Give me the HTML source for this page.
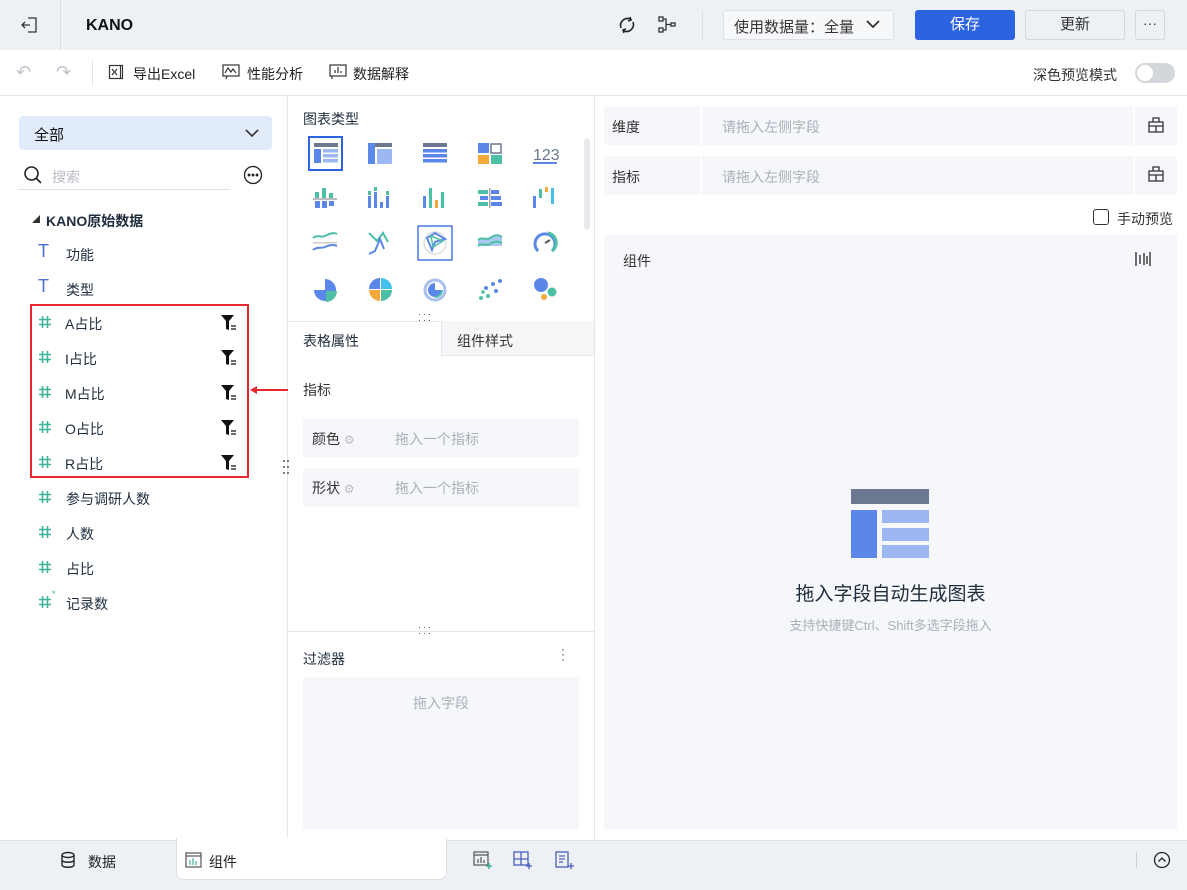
<!DOCTYPE html>
<html><head><meta charset="utf-8"><style>
*{box-sizing:border-box;margin:0;padding:0}
body{width:1187px;height:890px;position:relative;overflow:hidden;background:#fff;font-family:"Liberation Sans","Noto Sans CJK SC",sans-serif;font-size:14px;color:#1f2d3d}
.a{position:absolute}
.h{position:absolute;left:38px;width:14px;height:14px}
</style></head><body>
<svg width="0" height="0" style="position:absolute"><defs><g id="hs" stroke="#3fb39a" stroke-width="1.6" fill="none"><path d="M4.5 1v12M9.5 1v12M1 4.5h12M1 9.5h12"/></g></defs></svg>
<!-- top bar -->
<div class="a" style="left:0;top:0;width:1187px;height:50px;background:#edf0f5"></div>
<div class="a" style="left:60px;top:0;width:1px;height:50px;background:#d8dce3"></div>
<svg class="a" style="left:20px;top:15px" width="20" height="20" viewBox="0 0 20 20" fill="none" stroke="#333" stroke-width="1.3"><path d="M8 3h8v14H8M2 10h8M5 7l-3 3 3 3"/></svg>
<div class="a" style="left:86px;top:17px;font-weight:bold;font-size:16px;color:#111">KANO</div>
<svg class="a" style="left:617px;top:15px" width="20" height="20" viewBox="0 0 20 20" fill="none" stroke="#222" stroke-width="1.6"><path d="M4 13a7 7 0 0 1 9-9M16 7a7 7 0 0 1-9 9"/><path d="M13 2l1 3-3 1M7 18l-1-3 3-1"/></svg>
<svg class="a" style="left:657px;top:15px" width="20" height="20" viewBox="0 0 20 20" fill="none" stroke="#333" stroke-width="1.3"><rect x="2" y="2" width="4" height="4"/><rect x="2" y="13" width="4" height="4"/><rect x="14" y="8" width="4" height="3"/><path d="M6 4h3v11H6M9 9.5h5"/></svg>
<div class="a" style="left:702px;top:10px;width:1px;height:30px;background:#d8dce3"></div>
<div class="a" style="left:723px;top:10px;width:171px;height:30px;background:#f7f8fa;border:1px solid #dde1e7;border-radius:3px;font-size:15px;color:#333;padding:5px 0 0 10px">使用数据量：全量</div>
<svg class="a" style="left:865px;top:17px" width="16" height="14" viewBox="0 0 16 14" fill="none" stroke="#333" stroke-width="1.8"><path d="M2 4l6 6 6-6"/></svg>
<div class="a" style="left:915px;top:10px;width:100px;height:30px;background:#2c63e0;border-radius:3px;color:#fff;font-size:15px;text-align:center;line-height:30px">保存</div>
<div class="a" style="left:1025px;top:10px;width:100px;height:30px;background:#edf0f5;border:1px solid #d3d7de;border-radius:3px;color:#333;font-size:15px;text-align:center;line-height:28px">更新</div>
<div class="a" style="left:1135px;top:10px;width:30px;height:30px;border:1px solid #d3d7de;border-radius:3px;text-align:center;line-height:24px;color:#333">···</div>
<!-- toolbar -->
<div class="a" style="left:0;top:95px;width:1187px;height:1px;background:#e3e6eb"></div>
<div class="a" style="left:16px;top:62px;color:#c0c4cc;font-size:18px">↶</div>
<div class="a" style="left:56px;top:62px;color:#c0c4cc;font-size:18px">↷</div>
<div class="a" style="left:92px;top:60px;width:1px;height:26px;background:#e3e6eb"></div>
<svg class="a" style="left:108px;top:64px" width="16" height="16" viewBox="0 0 16 16" fill="none" stroke="#333" stroke-width="1.2"><rect x="1.5" y="1.5" width="11" height="13"/><path d="M4 5l5 6M9 5l-5 6M12.5 1.5h2v13h-2"/></svg>
<div class="a" style="left:133px;top:64px;font-size:14px;color:#222">导出Excel</div>
<svg class="a" style="left:222px;top:64px" width="18" height="16" viewBox="0 0 18 16" fill="none" stroke="#333" stroke-width="1.2"><rect x="1" y="1" width="16" height="11"/><path d="M3 9l3-5 3 4 2-3 3 4M5 12l-1 3"/></svg>
<div class="a" style="left:247px;top:64px;color:#222">性能分析</div>
<svg class="a" style="left:329px;top:64px" width="18" height="16" viewBox="0 0 18 16" fill="none" stroke="#333" stroke-width="1.2"><rect x="1" y="1" width="16" height="11"/><path d="M6 9V6M9 9V3M12 9V7M3 12v3"/></svg>
<div class="a" style="left:353px;top:64px;color:#222">数据解释</div>
<div class="a" style="left:1033px;top:65px;color:#333;font-size:14px">深色预览模式</div>
<div class="a" style="left:1135px;top:63px;width:40px;height:20px;background:#d3d6db;border-radius:10px"><div style="position:absolute;left:2px;top:2px;width:16px;height:16px;background:#fff;border-radius:8px"></div></div>
<!-- left panel -->
<div class="a" style="left:287px;top:96px;width:1px;height:744px;background:#e3e6eb"></div>
<div class="a" style="left:19px;top:116px;width:253px;height:34px;background:#e1ebfb;border-radius:4px;padding:8px 0 0 15px;font-size:15px;color:#111">全部</div>
<svg class="a" style="left:244px;top:126px" width="16" height="14" viewBox="0 0 16 14" fill="none" stroke="#333" stroke-width="1.6"><path d="M2 4l6 6 6-6"/></svg>
<svg class="a" style="left:23px;top:165px" width="20" height="20" viewBox="0 0 20 20" fill="none" stroke="#222" stroke-width="1.6"><circle cx="8.5" cy="8.5" r="6.5"/><path d="M13 13l5 5"/></svg>
<div class="a" style="left:52px;top:167px;color:#b8bcc4">搜索</div>
<div class="a" style="left:18px;top:189px;width:212px;height:1px;background:#dcdfe5"></div>
<svg class="a" style="left:243px;top:165px" width="20" height="20" viewBox="0 0 20 20" fill="none" stroke="#222" stroke-width="1.3"><circle cx="10" cy="10" r="8.5"/><circle cx="6" cy="10" r=".8" fill="#222"/><circle cx="10" cy="10" r=".8" fill="#222"/><circle cx="14" cy="10" r=".8" fill="#222"/></svg>
<div class="a" style="left:32px;top:214px;font-size:8px;color:#333">◢</div>
<div class="a" style="left:46px;top:211px;font-weight:bold;color:#1f2d3d">KANO原始数据</div>
<div class="a" style="left:38px;top:241px;color:#4b6fd6;font-size:18px">T</div><div class="a" style="left:66px;top:245px">功能</div>
<div class="a" style="left:38px;top:276px;color:#4b6fd6;font-size:18px">T</div><div class="a" style="left:66px;top:280px">类型</div>
<div class="a" style="left:30px;top:304px;width:219px;height:174px;border:2px solid #e8262e"></div>
<svg class="h" style="top:315px"><use href="#hs"/></svg>
<svg class="h" style="top:350px"><use href="#hs"/></svg>
<svg class="h" style="top:385px"><use href="#hs"/></svg>
<svg class="h" style="top:420px"><use href="#hs"/></svg>
<svg class="h" style="top:455px"><use href="#hs"/></svg>
<svg class="h" style="top:490px"><use href="#hs"/></svg>
<svg class="h" style="top:525px"><use href="#hs"/></svg>
<svg class="h" style="top:560px"><use href="#hs"/></svg>
<svg class="h" style="top:595px"><use href="#hs"/></svg>
<div class="a" style="left:52px;top:589px;color:#3fb39a;font-size:9px">*</div>
<div class="a" style="left:65px;top:314px">A占比</div><div class="a" style="left:65px;top:349px">I占比</div><div class="a" style="left:65px;top:384px">M占比</div><div class="a" style="left:65px;top:419px">O占比</div><div class="a" style="left:65px;top:454px">R占比</div>
<div class="a" style="left:66px;top:489px">参与调研人数</div><div class="a" style="left:66px;top:524px">人数</div><div class="a" style="left:66px;top:559px">占比</div><div class="a" style="left:66px;top:594px">记录数</div>
<svg class="a" style="left:220px;top:314px" width="18" height="18" viewBox="0 0 18 18"><path d="M1 1h13l-5 6v9l-3-1V7z" fill="#111"/><path d="M11 12h5M11 15h5" stroke="#111" stroke-width="1.2"/></svg>
<svg class="a" style="left:220px;top:349px" width="18" height="18" viewBox="0 0 18 18"><path d="M1 1h13l-5 6v9l-3-1V7z" fill="#111"/><path d="M11 12h5M11 15h5" stroke="#111" stroke-width="1.2"/></svg>
<svg class="a" style="left:220px;top:384px" width="18" height="18" viewBox="0 0 18 18"><path d="M1 1h13l-5 6v9l-3-1V7z" fill="#111"/><path d="M11 12h5M11 15h5" stroke="#111" stroke-width="1.2"/></svg>
<svg class="a" style="left:220px;top:419px" width="18" height="18" viewBox="0 0 18 18"><path d="M1 1h13l-5 6v9l-3-1V7z" fill="#111"/><path d="M11 12h5M11 15h5" stroke="#111" stroke-width="1.2"/></svg>
<svg class="a" style="left:220px;top:454px" width="18" height="18" viewBox="0 0 18 18"><path d="M1 1h13l-5 6v9l-3-1V7z" fill="#111"/><path d="M11 12h5M11 15h5" stroke="#111" stroke-width="1.2"/></svg>
<svg class="a" style="left:250px;top:385px" width="40" height="10" viewBox="0 0 40 10"><path d="M4 5h34" stroke="#e8262e" stroke-width="2"/><path d="M0 5l7-4v8z" fill="#e8262e"/></svg>
<svg class="a" style="left:282px;top:459px" width="8" height="16" viewBox="0 0 8 16" fill="#555"><circle cx="2" cy="2" r="1"/><circle cx="6" cy="2" r="1"/><circle cx="2" cy="8" r="1"/><circle cx="6" cy="8" r="1"/><circle cx="2" cy="14" r="1"/><circle cx="6" cy="14" r="1"/></svg>
<!-- middle panel -->
<div class="a" style="left:594px;top:96px;width:1px;height:744px;background:#e3e6eb"></div>
<div class="a" style="left:303px;top:109px;font-size:14px;color:#1f2d3d">图表类型</div>
<div class="a" style="left:584px;top:138px;width:6px;height:92px;background:#e8eaee;border-radius:3px"></div>
<svg class="a" style="left:300px;top:130px" width="280" height="180" viewBox="300 130 280 180">
<rect x="309" y="137" width="33" height="33" fill="none" stroke="#2c63e0" stroke-width="2"/>
<rect x="314" y="143" width="24" height="4" fill="#6b7890"/><rect x="314" y="149" width="7" height="14" fill="#5b87e8"/><rect x="323" y="149" width="15" height="3.5" fill="#9bb8f3"/><rect x="323" y="154" width="15" height="3.5" fill="#9bb8f3"/><rect x="323" y="159" width="15" height="3.5" fill="#9bb8f3"/>
<rect x="368" y="143" width="24" height="4" fill="#6b7890"/><rect x="368" y="143" width="7" height="21" fill="#5b87e8"/><rect x="377" y="149" width="15" height="15" fill="#9bb8f3"/>
<rect x="423" y="143" width="24" height="4" fill="#6b7890"/><rect x="423" y="149" width="24" height="3.5" fill="#5b87e8"/><rect x="423" y="154" width="24" height="3.5" fill="#5b87e8"/><rect x="423" y="159" width="24" height="3.5" fill="#5b87e8"/>
<rect x="478" y="143" width="11" height="10" fill="#5b87e8"/><rect x="491" y="144" width="10" height="9" fill="none" stroke="#6b7890" stroke-width="1.5"/><rect x="478" y="155" width="11" height="9" fill="#f6a93b"/><rect x="491" y="155" width="11" height="9" fill="#4dbfa6"/>
<text x="533" y="160" font-size="16" fill="#6b7890" font-family="Liberation Sans">123</text><rect x="533" y="162" width="24" height="2" fill="#5b87e8"/>
<g fill="#5b87e8"><rect x="315" y="201" width="5" height="7"/><rect x="322" y="201" width="5" height="7"/><rect x="329" y="201" width="5" height="5"/></g><g fill="#4dbfa6"><rect x="315" y="192" width="4" height="6"/><rect x="322" y="188" width="4" height="10"/><rect x="329" y="193" width="4" height="5"/></g><rect x="313" y="198" width="24" height="2" fill="#bbb"/>
<g fill="#5b87e8"><rect x="368" y="196" width="3" height="12"/><rect x="374" y="192" width="3" height="16"/><rect x="380" y="202" width="3" height="6"/><rect x="386" y="196" width="3" height="12"/></g><g fill="#4dbfa6"><rect x="368" y="191" width="3" height="4"/><rect x="374" y="187" width="3" height="4"/><rect x="386" y="191" width="3" height="4"/></g>
<rect x="423" y="196" width="3" height="12" fill="#5b87e8"/><rect x="429" y="188" width="3" height="20" fill="#4dbfa6"/><rect x="435" y="200" width="3" height="8" fill="#f6a93b"/><rect x="441" y="192" width="3" height="16" fill="#4dbfa6"/>
<rect x="478" y="190" width="10" height="4" fill="#4dbfa6"/><rect x="491" y="190" width="8" height="4" fill="#5b87e8"/><rect x="480" y="196" width="8" height="4" fill="#5b87e8"/><rect x="491" y="196" width="10" height="4" fill="#5b87e8"/><rect x="478" y="202" width="10" height="4" fill="#4dbfa6"/><rect x="491" y="202" width="11" height="4" fill="#5b87e8"/><rect x="489" y="188" width="1.5" height="20" fill="#aaa"/>
<rect x="533" y="196" width="3" height="12" fill="#5b87e8"/><rect x="539" y="189" width="3" height="9" fill="#4dbfa6"/><rect x="545" y="187" width="3" height="5" fill="#f6a93b"/><rect x="551" y="188" width="3" height="16" fill="#43c0f0"/>
<path d="M313 238c5-4 8 0 12-2s8-4 12-2" fill="none" stroke="#4dbfa6" stroke-width="2"/><rect x="313" y="242" width="24" height="1.5" fill="#ccc"/><path d="M313 250c5-4 8-1 12-3s8-3 12-1" fill="none" stroke="#5b87e8" stroke-width="2"/>
<path d="M369 233l8 8 6-8 5 9" fill="none" stroke="#4dbfa6" stroke-width="2"/><path d="M369 254l6-3 5-12 4 10" fill="none" stroke="#5b87e8" stroke-width="2"/>
<rect x="418" y="226" width="34" height="34" fill="none" stroke="#2c63e0" stroke-width="1.3"/><circle cx="435" cy="243" r="11" fill="none" stroke="#ddd" stroke-width="1.5"/><path d="M427 238l8-5 10 6-10 3-3 8z" fill="none" stroke="#5b87e8" stroke-width="2"/><path d="M431 236l12 5-10 6z" fill="none" stroke="#4dbfa6" stroke-width="1.5"/>
<path d="M478 240c5-4 8 1 12-2s8-4 12-1v9h-24z" fill="#a9c9f0"/><path d="M478 240c5-4 8 1 12-2s8-4 12-1" fill="none" stroke="#4dbfa6" stroke-width="2"/><path d="M478 246c5-4 8 1 12-2s8-3 12-1" fill="none" stroke="#4dbfa6" stroke-width="2"/>
<path d="M538 251a10 10 0 1 1 14 0" fill="none" stroke="#5b87e8" stroke-width="3"/><path d="M548 233a10 10 0 0 1 4 18" fill="none" stroke="#4dbfa6" stroke-width="3"/><path d="M545 243l5-3" stroke="#555" stroke-width="2"/>
<path d="M325 279a11 11 0 1 1-11 11h11z" fill="#5b87e8"/><path d="M326 291h11a11 11 0 0 1-11 11z" fill="#4dbfa6"/>
<path d="M380 289v-11a11 11 0 0 0-11 11z" fill="#5b87e8"/><path d="M381 289v-11a11 11 0 0 1 11 11z" fill="#43c0f0"/><path d="M380 290h-11a11 11 0 0 0 11 11z" fill="#f6a93b"/><path d="M381 290h11a11 11 0 0 1-11 11z" fill="#4dbfa6"/>
<circle cx="435" cy="290" r="10" fill="none" stroke="#a9c0f0" stroke-width="3"/><path d="M435 283a7 7 0 1 0 7 7h-7z" fill="#5b87e8"/><path d="M442 290a7 7 0 0 1-7 7" stroke="#4dbfa6" stroke-width="2" fill="none"/>
<g fill="#5b87e8"><circle cx="500" cy="281" r="2"/><circle cx="493" cy="284" r="2"/><circle cx="496" cy="291" r="2"/><circle cx="486" cy="288" r="2"/></g><g fill="#4dbfa6"><circle cx="481" cy="298" r="2"/><circle cx="488" cy="296" r="2"/><circle cx="483" cy="292" r="1.8"/></g>
<circle cx="541" cy="285" r="7" fill="#5b87e8"/><circle cx="552" cy="292" r="4.5" fill="#4dbfa6"/><circle cx="544" cy="297" r="3" fill="#f6a93b"/>
</svg>
<div class="a" style="left:418px;top:311px;font-size:9px;color:#444;letter-spacing:2px;line-height:6px">···<br>···</div>
<div class="a" style="left:288px;top:321px;width:306px;height:1px;background:#e3e6eb"></div>
<div class="a" style="left:441px;top:321px;width:153px;height:35px;background:#f5f6f8;border-left:1px solid #e3e6eb;border-bottom:1px solid #e3e6eb"></div>
<div class="a" style="left:303px;top:331px;font-size:14px">表格属性</div>
<div class="a" style="left:457px;top:331px;font-size:14px;color:#333">组件样式</div>
<div class="a" style="left:303px;top:380px;color:#333">指标</div>
<div class="a" style="left:303px;top:418px;width:276px;height:39px;background:#f5f7fa"></div>
<div class="a" style="left:312px;top:429px;color:#333">颜色 <span style="color:#bbb;font-size:12px">⚙</span></div>
<div class="a" style="left:395px;top:429px;color:#aab0ba">拖入一个指标</div>
<div class="a" style="left:303px;top:468px;width:276px;height:39px;background:#f5f7fa"></div>
<div class="a" style="left:312px;top:478px;color:#333">形状 <span style="color:#bbb;font-size:12px">⚙</span></div>
<div class="a" style="left:395px;top:478px;color:#aab0ba">拖入一个指标</div>
<div class="a" style="left:418px;top:624px;font-size:9px;color:#444;letter-spacing:2px;line-height:6px">···<br>···</div>
<div class="a" style="left:288px;top:631px;width:306px;height:1px;background:#e3e6eb"></div>
<div class="a" style="left:303px;top:649px;color:#1f2d3d">过滤器</div>
<div class="a" style="left:561px;top:647px;color:#333;font-size:12px;line-height:5px">·<br>·<br>·</div>
<div class="a" style="left:303px;top:677px;width:276px;height:153px;background:#f5f7fa;text-align:center;padding-top:16px;color:#aab0ba">拖入字段</div>
<!-- right panel -->
<div class="a" style="left:604px;top:106px;width:96px;height:39px;background:#f5f7fa;padding:11px 0 0 8px;color:#333">维度</div>
<div class="a" style="left:702px;top:106px;width:431px;height:39px;background:#f5f7fa;padding:11px 0 0 20px;color:#aab0ba">请拖入左侧字段</div>
<div class="a" style="left:1135px;top:106px;width:42px;height:39px;background:#f5f7fa"></div>
<div class="a" style="left:604px;top:156px;width:96px;height:39px;background:#f5f7fa;padding:11px 0 0 8px;color:#333">指标</div>
<div class="a" style="left:702px;top:156px;width:431px;height:39px;background:#f5f7fa;padding:11px 0 0 20px;color:#aab0ba">请拖入左侧字段</div>
<div class="a" style="left:1135px;top:156px;width:42px;height:39px;background:#f5f7fa"></div>
<svg class="a" style="left:1148px;top:117px" width="16" height="16" viewBox="0 0 16 16" fill="none" stroke="#333" stroke-width="1.3"><path d="M5 5V1h6v4M1 5h14v10H1zM1 9h14M8 9v6"/></svg>
<svg class="a" style="left:1148px;top:166px" width="16" height="16" viewBox="0 0 16 16" fill="none" stroke="#333" stroke-width="1.3"><path d="M5 5V1h6v4M1 5h14v10H1zM1 9h14M8 9v6"/></svg>
<div class="a" style="left:1093px;top:209px;width:16px;height:16px;border:1.3px solid #333;border-radius:3px"></div>
<div class="a" style="left:1117px;top:209px;color:#333">手动预览</div>
<div class="a" style="left:604px;top:235px;width:573px;height:595px;background:#f5f7fa"></div>
<div class="a" style="left:623px;top:251px;color:#333">组件</div>
<svg class="a" style="left:1134px;top:250px" width="18" height="18" viewBox="0 0 18 18" stroke="#333" stroke-width="1.4"><path d="M2 2v14M16 2v14M6 5v9M10 3v12M13 6v8"/></svg>
<div class="a" style="left:851px;top:489px;width:78px;height:15px;background:#6b7890"></div>
<div class="a" style="left:851px;top:510px;width:26px;height:48px;background:#5b87e8"></div>
<div class="a" style="left:882px;top:510px;width:47px;height:13px;background:#9bb8f3"></div>
<div class="a" style="left:882px;top:528px;width:47px;height:13px;background:#9bb8f3"></div>
<div class="a" style="left:882px;top:545px;width:47px;height:13px;background:#9bb8f3"></div>
<div class="a" style="left:604px;top:579px;width:573px;text-align:center;font-size:19px;color:#1f2d3d">拖入字段自动生成图表</div>
<div class="a" style="left:604px;top:615px;width:573px;text-align:center;font-size:13px;color:#aab0ba">支持快捷键Ctrl、Shift多选字段拖入</div>
<!-- bottom -->
<div class="a" style="left:0;top:840px;width:1187px;height:50px;background:#edf0f5;border-top:1px solid #dcdfe5"></div>
<div class="a" style="left:176px;top:838px;width:271px;height:42px;background:#fff;border:1px solid #dcdfe5;border-top:none;border-radius:0 0 8px 8px"></div>
<svg class="a" style="left:59px;top:851px" width="18" height="18" viewBox="0 0 18 18" fill="none" stroke="#222" stroke-width="1.4"><ellipse cx="9" cy="4" rx="6" ry="2.5"/><path d="M3 4v10c0 3 12 3 12 0V4M3 9c0 3 12 3 12 0"/></svg>
<div class="a" style="left:88px;top:852px;font-size:14px;color:#222">数据</div>
<svg class="a" style="left:185px;top:852px" width="17" height="16" viewBox="0 0 17 16" fill="none" stroke="#555" stroke-width="1.2"><rect x="1" y="1" width="15" height="14"/><path d="M1 4h15"/><path d="M5 13V8M8 13V6M11 13V9" stroke="#3fb39a"/></svg>
<div class="a" style="left:209px;top:852px;font-size:14px;color:#222">组件</div>
<svg class="a" style="left:473px;top:850px" width="20" height="20" viewBox="0 0 20 20" fill="none" stroke="#555" stroke-width="1.2"><rect x="1" y="2" width="14" height="13"/><path d="M1 5h14M5 13V9M8 13V7M11 13V10" /><path d="M16 13v6M13 16h6" stroke="#3fb39a" stroke-width="1.5"/></svg>
<svg class="a" style="left:513px;top:850px" width="20" height="20" viewBox="0 0 20 20" fill="none" stroke="#4b5fc0" stroke-width="1.3"><rect x="1" y="2" width="14" height="13"/><path d="M8 2v13M1 9h14M16 13v6M13 16h6"/></svg>
<svg class="a" style="left:555px;top:850px" width="20" height="20" viewBox="0 0 20 20" fill="none" stroke="#4b5fc0" stroke-width="1.3"><rect x="1" y="2" width="12" height="15"/><path d="M4 6h6M4 9h6M4 12h4M16 13v6M13 16h6"/></svg>
<div class="a" style="left:1136px;top:852px;width:1px;height:16px;background:#ccc"></div>
<svg class="a" style="left:1153px;top:851px" width="18" height="18" viewBox="0 0 18 18" fill="none" stroke="#222" stroke-width="1.3"><circle cx="9" cy="9" r="7.5"/><path d="M5.5 10.5L9 7l3.5 3.5"/></svg>
</body></html>
